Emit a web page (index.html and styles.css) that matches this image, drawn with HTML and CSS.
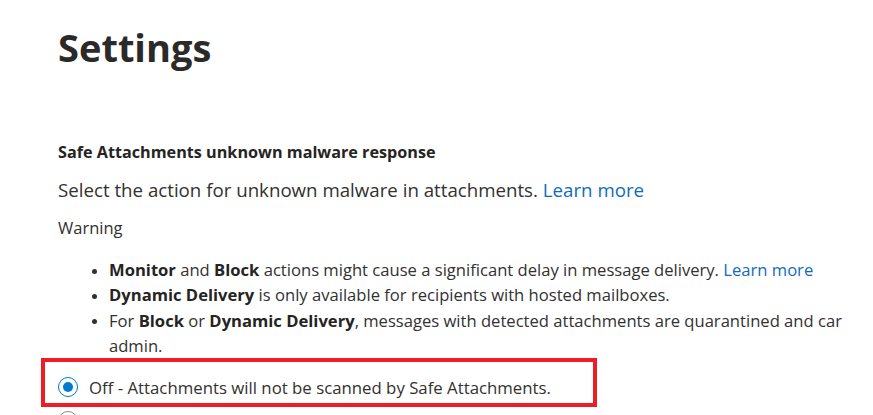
FILE: index.html
```html
<!DOCTYPE html>
<html lang="en">
<head>
<meta charset="utf-8">
<title>Settings</title>
<link rel="stylesheet" href="styles.css">
</head>
<body>
<main class="page">
  <h1 class="title">Settings</h1>
  <section class="section">
    <h2 class="section-title">Safe Attachments unknown malware response</h2>
    <p class="lead">Select the action for unknown malware in attachments. <a class="link" href="#">Learn more</a></p>
    <p class="warning-label">Warning</p>
    <ul class="warning-list">
      <li><b>Monitor</b> and <b>Block</b> actions might cause a significant delay in message delivery. <a class="link" href="#">Learn more</a></li>
      <li><b>Dynamic Delivery</b> is only available for recipients with hosted mailboxes.</li>
      <li>For <b>Block</b> or <b>Dynamic Delivery</b>, messages with detected attachments are quarantined and car<br>admin.</li>
    </ul>
    <div class="highlight">
      <label class="option">
        <span class="radio checked"></span>
        <span class="option-text">Off - Attachments will not be scanned by Safe Attachments.</span>
      </label>
    </div>
    <div class="option next">
      <span class="radio"></span>
    </div>
  </section>
</main>
</body>
</html>
```

FILE: styles.css
```css
html, body {
  margin: 0;
  padding: 0;
  background: #ffffff;
  height: 100%;
  overflow: hidden;
}

body {
  font-family: "Open Sans", "Noto Sans", sans-serif;
  color: #323130;
}

.page {
  padding: 19px 0 0 58px;
}

.title {
  margin: 0;
  font-size: 38px;
  line-height: 56px;
  font-weight: 700;
  color: #2b2a29;
}

.section {
  margin-top: 66px;
}

.section-title {
  margin: 0;
  font-size: 16.2px;
  line-height: 22px;
  font-weight: 700;
  color: #252423;
}

.lead {
  margin: 15px 0 0;
  font-size: 18.7px;
  line-height: 24px;
}

.link {
  color: #0f6cbd;
  text-decoration: none;
}

.warning-label {
  margin: 15px 0 0;
  font-size: 16.5px;
  line-height: 22px;
}

.warning-list {
  margin: 18px 0 0;
  padding-left: 51px;
  font-size: 16.6px;
  line-height: 25.3px;
  white-space: nowrap;
  list-style: none;
}

.warning-list li::before {
  content: "";
  display: inline-block;
  width: 5px;
  height: 5px;
  border-radius: 50%;
  background: #323130;
  margin-left: -17px;
  margin-right: 12px;
  vertical-align: 0.15em;
}

.warning-list b {
  font-weight: 700;
  color: #252423;
}

.highlight {
  margin: 0 0 0 -17px;
  width: 535px;
  height: 26px;
  border: 4px solid #ee1c25;
  padding: 15px 0 0 13px;
}

.option {
  display: flex;
  align-items: center;
  gap: 11px;
  height: 20px;
  font-size: 16.8px;
  white-space: nowrap;
}

.option.next {
  margin-top: 4px;
}

.radio {
  flex: none;
  width: 20px;
  height: 20px;
  border-radius: 50%;
  border: 1px solid #8a8886;
  box-sizing: border-box;
  display: flex;
  align-items: center;
  justify-content: center;
}

.radio.checked {
  border-color: #0078d4;
}

.radio.checked::after {
  content: "";
  width: 10px;
  height: 10px;
  border-radius: 50%;
  background: #0078d4;
}
```
